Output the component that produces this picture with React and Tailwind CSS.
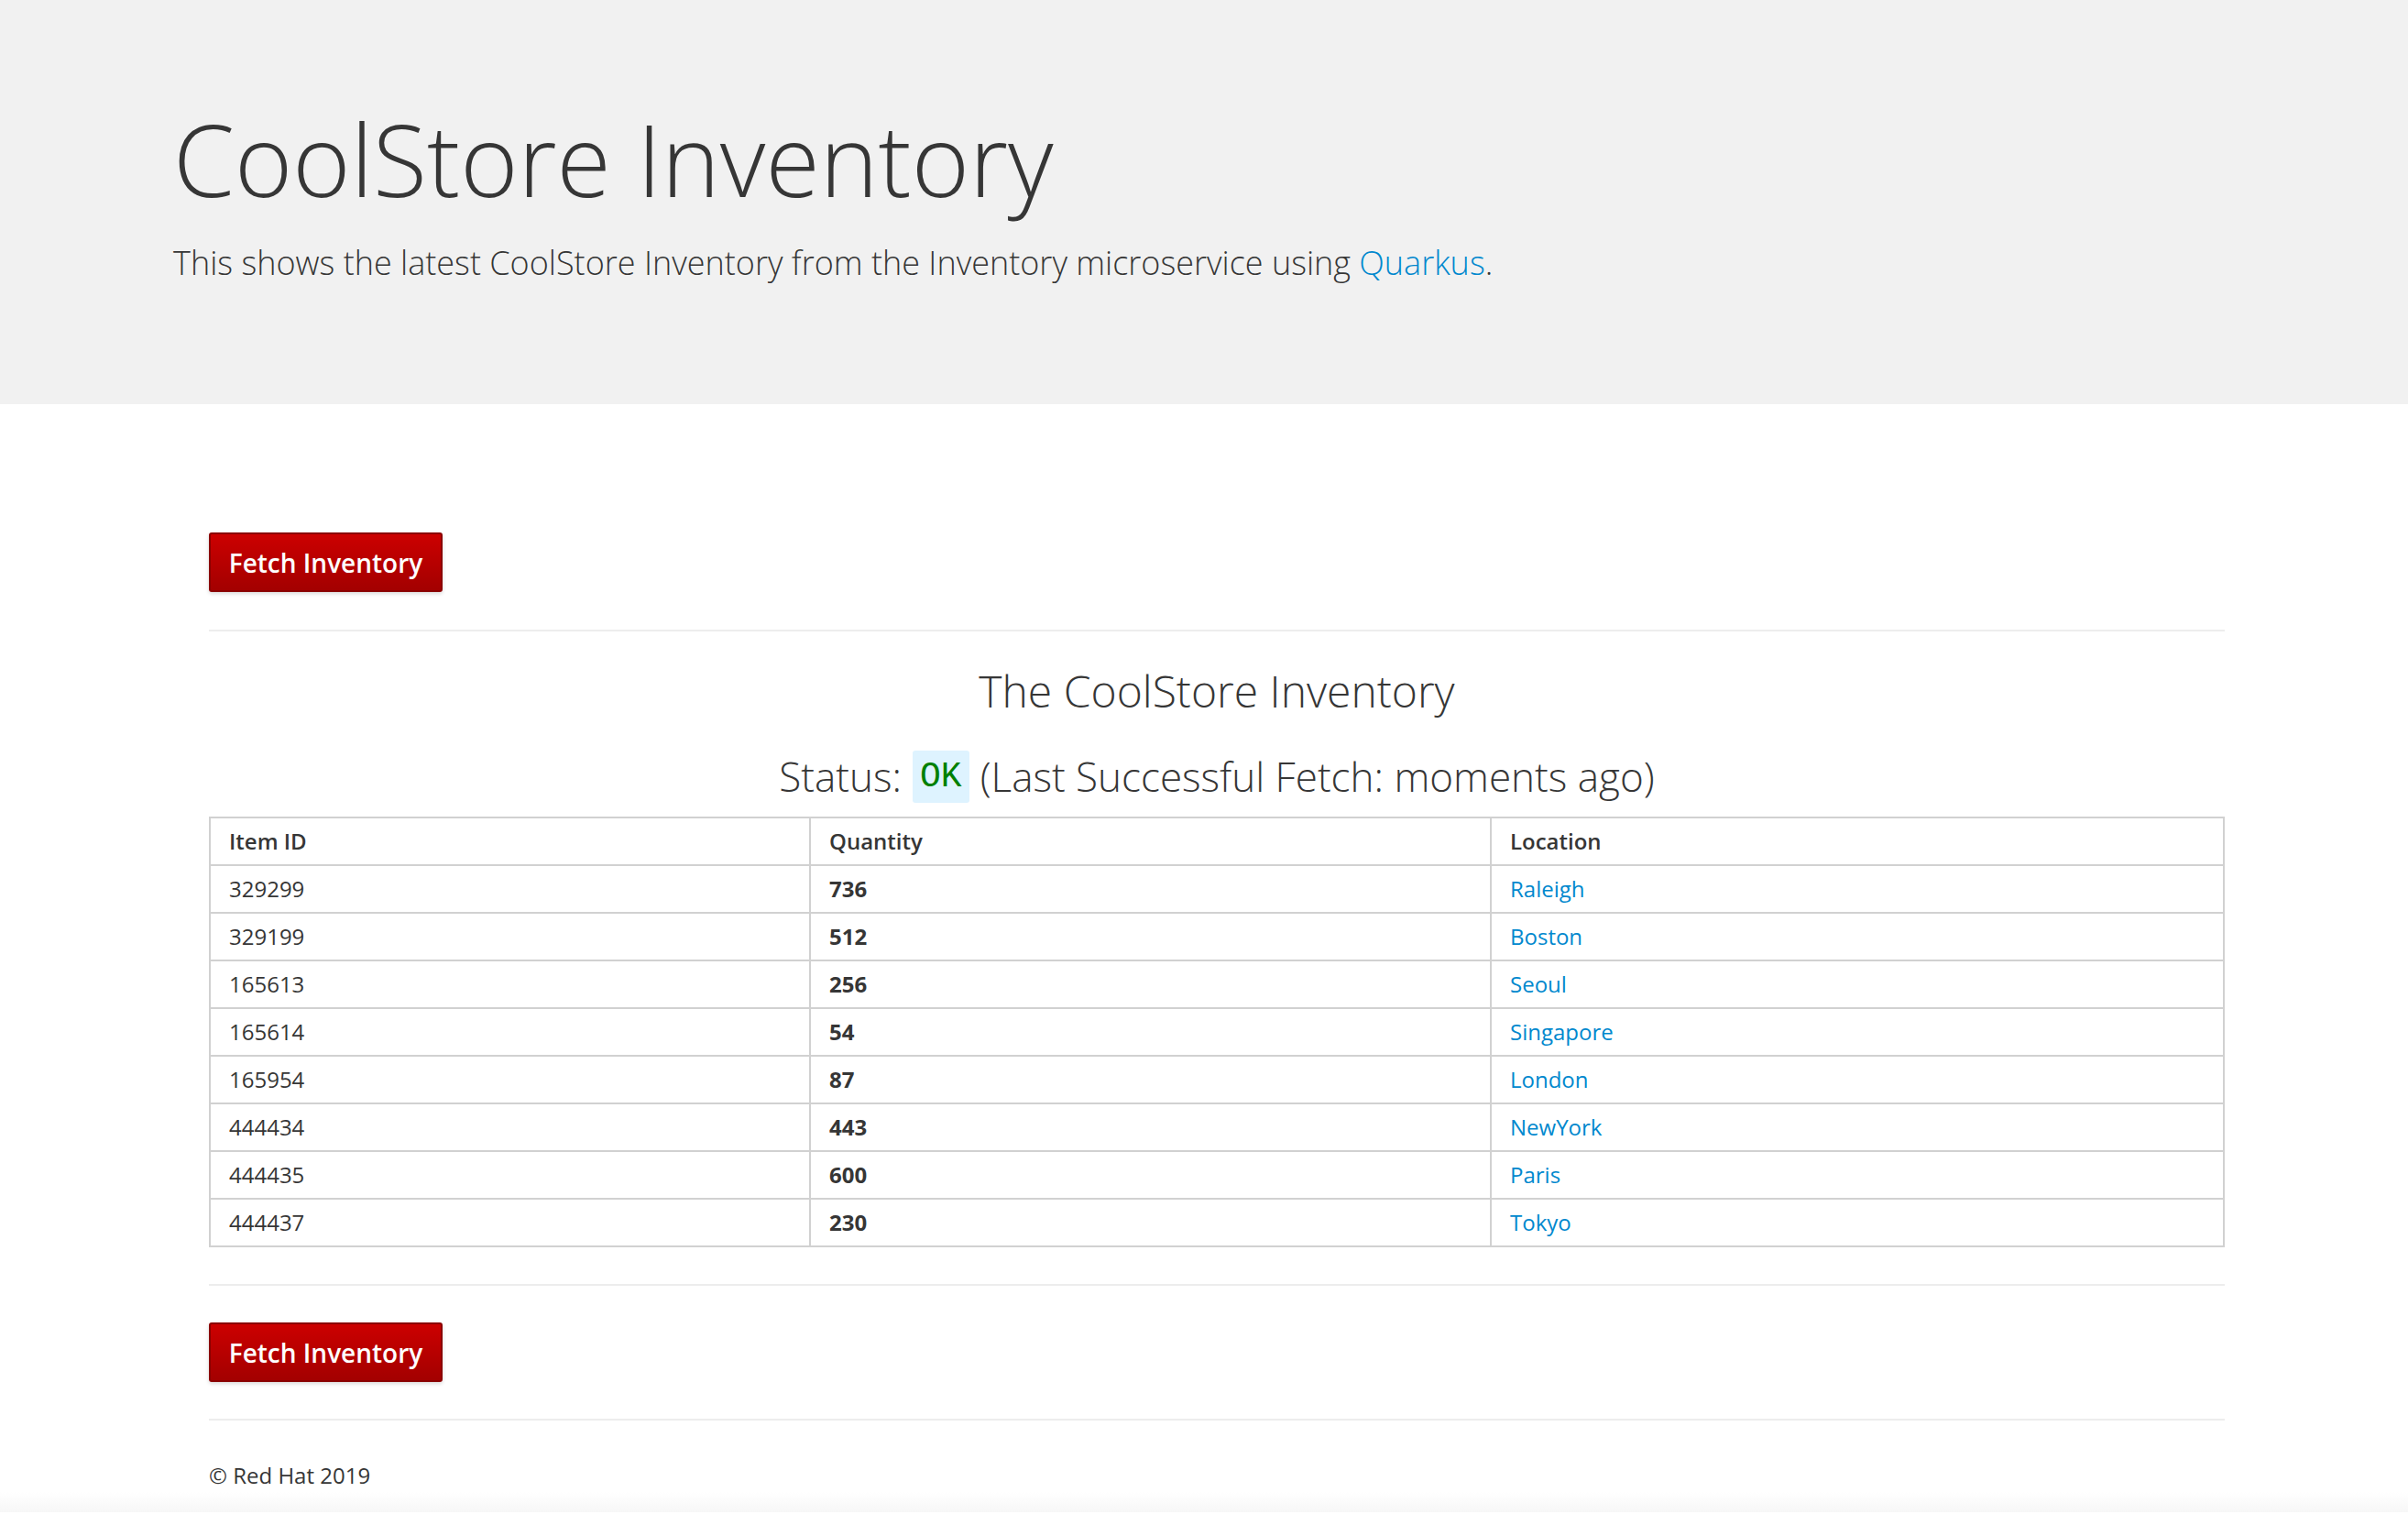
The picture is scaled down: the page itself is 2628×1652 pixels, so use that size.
const items = [
  { id: "329299", qty: 736, loc: "Raleigh" },
  { id: "329199", qty: 512, loc: "Boston" },
  { id: "165613", qty: 256, loc: "Seoul" },
  { id: "165614", qty: 54, loc: "Singapore" },
  { id: "165954", qty: 87, loc: "London" },
  { id: "444434", qty: 443, loc: "NewYork" },
  { id: "444435", qty: 600, loc: "Paris" },
  { id: "444437", qty: 230, loc: "Tokyo" },
];

const FetchButton = () => (
  <button className="h-[65px] w-[255px] rounded-[3px] border-2 border-[#8b0000] bg-gradient-to-b from-[#cc0000] to-[#a30000] text-[28px] font-semibold text-white shadow-[0_2px_4px_rgba(0,0,0,0.15)]">
    Fetch Inventory
  </button>
);

const Divider = () => <div className="h-[2px] w-full bg-[#ededed]"></div>;

export default function App() {
  return (
    <div className="min-h-[1652px] bg-white font-['Open_Sans',sans-serif] text-[#363636]">
      <div className="h-[441px] bg-[#f1f1f1] pl-[189px] pt-[115px]">
        <h1 className="text-[108px] font-light leading-[1.1]">CoolStore Inventory</h1>
        <p className="mt-[28px] text-[36px] font-light leading-[1.4]">
          This shows the latest CoolStore Inventory from the Inventory microservice using{" "}
          <a className="text-[#0088ce]">Quarkus</a>.
        </p>
      </div>

      <div className="ml-[228px] w-[2200px] pt-[140px]">
        <FetchButton />
        <div className="mt-[41px]">
          <Divider />
        </div>

        <h2 className="mt-[36px] text-center text-[48px] font-light leading-[1.2]">The CoolStore Inventory</h2>
        <h3 className="mt-[36px] flex items-center justify-center text-[44px] font-light leading-[1.2]">
          <span>Status:</span>
          <code className="ml-[12px] mr-[12px] rounded-[3px] bg-[#def3ff] px-[8px] py-[6px] font-['Liberation_Mono',monospace] text-[38px] text-[#008000]">
            OK
          </code>
          <span>(Last Successful Fetch: moments ago)</span>
        </h3>

        <table className="mt-[15px] w-full table-fixed border-collapse border-2 border-[#d1d1d1] text-[24px]">
          <colgroup>
            <col className="w-[655px]" />
            <col className="w-[743px]" />
            <col />
          </colgroup>
          <thead>
            <tr>
              <th className="h-[52px] border-2 border-[#d1d1d1] px-[20px] text-left font-semibold">Item ID</th>
              <th className="h-[52px] border-2 border-[#d1d1d1] px-[20px] text-left font-semibold">Quantity</th>
              <th className="h-[52px] border-2 border-[#d1d1d1] px-[20px] text-left font-semibold">Location</th>
            </tr>
          </thead>
          <tbody>
            {items.map((it) => (
              <tr key={it.id}>
                <td className="h-[52px] border-2 border-[#d1d1d1] px-[20px]">{it.id}</td>
                <td className="h-[52px] border-2 border-[#d1d1d1] px-[20px] font-bold">{it.qty}</td>
                <td className="h-[52px] border-2 border-[#d1d1d1] px-[20px] text-[#0088ce]">{it.loc}</td>
              </tr>
            ))}
          </tbody>
        </table>

        <div className="mt-[40px]">
          <Divider />
        </div>
        <div className="mt-[40px]">
          <FetchButton />
        </div>
        <div className="mt-[40px]">
          <Divider />
        </div>
        <p className="mt-[42px] text-[24px]">© Red Hat 2019</p>
      </div>
      <div className="h-[22px] bg-gradient-to-b from-white to-[#f7f7f7]"></div>
    </div>
  );
}
